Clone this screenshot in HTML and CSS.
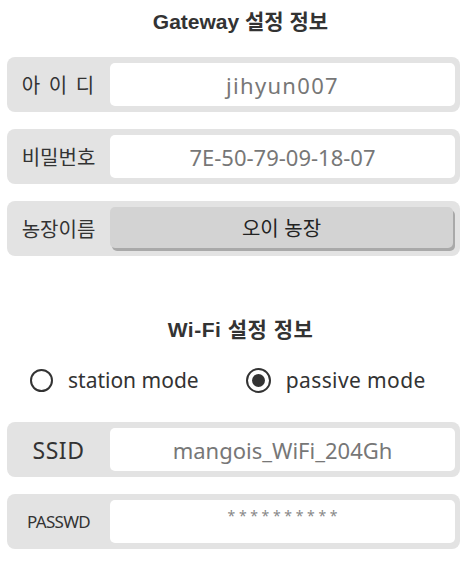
FILE: index.html
```html
<!DOCTYPE html>
<html lang="ko">
<head>
<meta charset="utf-8">
<link rel="stylesheet" href="styles.css">
</head>
<body>
<div class="page">
  <h2 class="title title-gw">Gateway 설정 정보</h2>
  <div class="row">
    <div class="label label-id">아 이 디</div>
    <div class="field field-id">jihyun007</div>
  </div>
  <div class="row">
    <div class="label">비밀번호</div>
    <div class="field">7E-50-79-09-18-07</div>
  </div>
  <div class="row">
    <div class="label">농장이름</div>
    <div class="button">오이 농장</div>
  </div>

  <h2 class="title title-wifi">Wi-Fi 설정 정보</h2>
  <div class="radios">
    <div class="radio"><span class="circle"></span><span class="rtext">station mode</span></div>
    <div class="radio"><span class="circle checked"></span><span class="rtext">passive mode</span></div>
  </div>
  <div class="row row-ssid">
    <div class="label label-lg">SSID</div>
    <div class="field">mangois_WiFi_204Gh</div>
  </div>
  <div class="row">
    <div class="label label-sm">PASSWD</div>
    <div class="field field-pw">* * * * * * * * * *</div>
  </div>
</div>
</body>
</html>
```

FILE: styles.css
```css
* { box-sizing: border-box; }
body {
  margin: 0;
  background: #fff;
  font-family: "Noto Sans", "Noto Sans CJK KR", sans-serif;
  color: #333;
}
.page {
  width: 469px;
  padding: 0 9px 0 7px;
}
.title {
  margin: 0;
  height: 30px;
  line-height: 30px;
  text-align: center;
  font-size: 21px;
  font-weight: 700;
  color: #333;
  padding-left: 14px;
  font-family: "Liberation Sans", "Noto Sans CJK KR", sans-serif;
}
.title-gw { margin-top: 7px; margin-bottom: 20px; }
.title-wifi { margin-top: 59px; letter-spacing: 0.5px; }
.row {
  display: flex;
  height: 55px;
  background: #e3e3e3;
  border-radius: 8px;
  padding: 6px 5px 6px 0;
  margin-bottom: 17px;
}
.label {
  width: 103px;
  flex: none;
  display: flex;
  align-items: center;
  justify-content: center;
  font-family: "Noto Sans CJK KR", sans-serif;
  font-size: 20px;
  color: #333;
}
.label-id { letter-spacing: 1px; word-spacing: 1px; }
.label-lg { font-size: 23px; letter-spacing: 0.5px; font-family: "Noto Sans", sans-serif; }
.label-sm { font-size: 17px; letter-spacing: -0.7px; font-family: "Noto Sans", sans-serif; }
.field {
  flex: 1;
  background: #fff;
  border-radius: 5px;
  display: flex;
  align-items: center;
  justify-content: center;
  font-size: 22px;
  color: #777;
}
.field-id { letter-spacing: 1.3px; }
.field-pw {
  align-items: flex-start;
  padding-top: 6px;
  font-size: 14px;
  color: #888;
}
.button {
  flex: 1;
  background: #d3d3d3;
  border-radius: 5px;
  box-shadow: 2px 3px 0 #a9a9a9;
  display: flex;
  align-items: center;
  justify-content: center;
  font-family: "Noto Sans CJK KR", sans-serif;
  font-size: 20px;
  color: #222;
  margin-right: 2px;
  margin-bottom: 2px;
}
.radios {
  display: flex;
  height: 30px;
  margin-top: 20px;
  margin-bottom: 27px;
  padding-left: 23px;
}
.radio {
  display: flex;
  align-items: center;
  gap: 15px;
}
.radio + .radio { margin-left: 47px; }
.circle {
  width: 23px;
  height: 23px;
  border: 2.5px solid #333;
  border-radius: 50%;
  display: flex;
  align-items: center;
  justify-content: center;
}
.circle.checked {
  width: 25px;
  height: 25px;
}
.circle.checked::after {
  content: "";
  width: 13px;
  height: 13px;
  background: #333;
  border-radius: 50%;
}
.rtext {
  font-size: 21px;
  color: #333;
}
.radio + .radio .rtext { letter-spacing: 0.4px; }
```
